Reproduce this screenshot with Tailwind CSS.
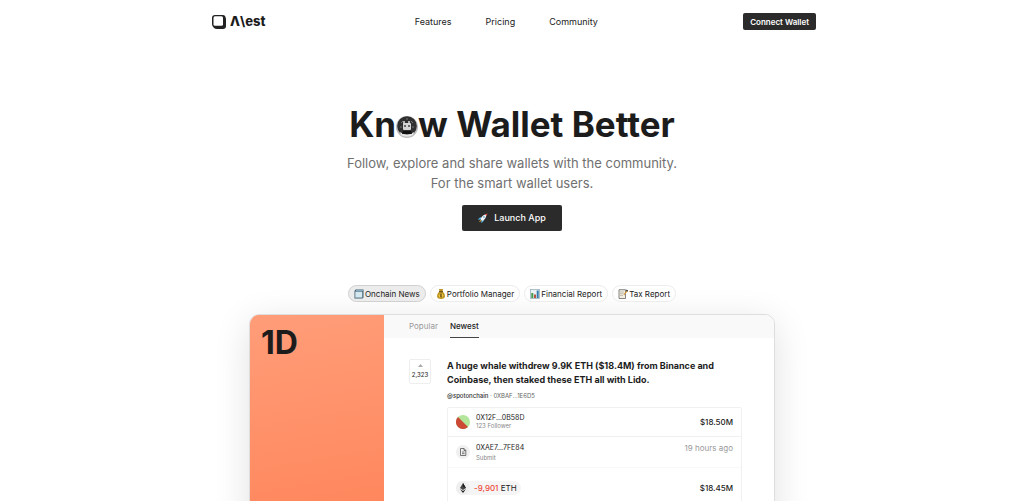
<!DOCTYPE html>
<html lang="en">
<head>
    <meta charset="UTF-8">
    <meta name="viewport" content="width=device-width, initial-scale=1.0">
    <title>Mest - Know Wallet Better</title>
    <script src="https://cdn.jsdelivr.net/npm/@tailwindcss/browser@4"></script>
</head>
<body class="h-screen overflow-hidden bg-white font-['Inter',sans-serif] text-[#1c1c1c]">
    <!-- Header -->
    <header class="mx-auto flex h-[43px] max-w-[608px] items-center justify-between pl-1">
        <a href="#" aria-label="Mest" class="flex items-center gap-1">
            <svg class="size-3.5" viewBox="0 0 14 14">
                <path d="M3 0h8q2 0 2.500 2L14 4v7q0 3-3 3H5q-2 0-3-1L0.500 11Q0 10 0 9V3q0-3 3-3z" fill="#222"/>
                <rect x="1.500" y="1.300" width="9.500" height="9.500" rx="1.500" fill="#fff"/>
            </svg>
            <span class="flex text-[13px] font-extrabold"><span>Λ</span><span>\</span><span>est</span></span>
        </a>
        <nav class="flex gap-[34px] pl-1 text-[9px]">
            <a href="#features">Features</a>
            <a href="#pricing">Pricing</a>
            <a href="#community">Community</a>
        </nav>
        <button class="h-[17px] rounded-[2px] bg-[#2b2b2b] px-[7px] text-[8px] font-semibold text-white">Connect Wallet</button>
    </header>

    <main>
        <!-- Hero -->
        <section class="flex flex-col items-center pt-[59px] text-center">
            <h1 class="flex items-center text-[35px] leading-[44px] font-bold">
                <span>Kn</span>
                <svg class="mt-1.5 size-[22px]" viewBox="0 0 22 22" role="img" aria-label="o">
                    <circle cx="11" cy="11" r="11" fill="#bdbdbd"/>
                    <circle cx="11" cy="10" r="9.800" fill="#303030"/>
                    <path d="M4 16Q11 21 18 16L17 19Q11 22 5 19z" fill="#e8e8e8"/>
                    <path d="M5 7l2-2M15 5l2 2M4 11h2M16 11h2M11 2v2" stroke="#777" stroke-width="1"/>
                    <rect x="7" y="7" width="8" height="7" rx="1" fill="#d5d5d5"/>
                    <path d="M8 5v3M13 5v3" stroke="#ddd" stroke-width="1.500"/>
                    <path d="M9 9v2M13 9v2" stroke="#444" stroke-width="1.500"/>
                    <path d="M7 15h8l1 3H6z" fill="#111"/>
                </svg>
                <span class="whitespace-pre">w Wallet Better</span>
            </h1>
            <p class="mt-[7px] text-[13px] leading-5 text-[#707070]">Follow, explore and share wallets with the community.<br>For the smart wallet users.</p>
            <button class="mt-3 flex h-[26px] w-[100px] items-center justify-center gap-1.5 rounded-[2px] bg-[#2b2b2b] text-[9px] font-medium text-white">
                <svg class="size-2.5" viewBox="0 0 10 10">
                    <path d="M3 4L1 5 0 7l3-.5zM6 7L5 9 3 10l.5-3z" fill="#4aa3c9"/>
                    <path d="M2.500 6Q4 2 8.500 1.200 8.500 6 4 8z" fill="#eef4f7"/>
                    <path d="M7 1.500L9.500.300 8.700 3z" fill="#d9533b"/>
                    <circle cx="6" cy="4" r="1" fill="#8dbbd0"/>
                    <path d="M2.500 7L.800 9.200 3.500 8z" fill="#f4a23b"/>
                </svg>
                Launch App
            </button>
        </section>

        <!-- Feature tabs -->
        <div class="mt-[54px] flex justify-center gap-1 text-[8px] text-[#222]">
            <button class="flex h-[17px] items-center gap-px rounded-full border border-[#d0d0d0] bg-[#ececec] px-[5px]">
                <svg class="size-2.5" viewBox="0 0 10 10">
                    <path d="M1.500.500h8v8l-1 1H.500V2z" fill="#3f5e6e"/>
                    <path d="M1.300 2.600h7v6h-7z" fill="#d6e8ef"/>
                    <path d="M2 1.400h7" stroke="#91b8ca" stroke-width="1"/>
                </svg>
                Onchain News
            </button>
            <button class="flex h-[17px] items-center gap-px rounded-full border border-[#ececec] bg-white px-[5px]">
                <svg class="size-2.5" viewBox="0 0 10 10">
                    <path d="M3 0h4L6.500 2.500Q9 4 9 7 9 10 5 10T1 7Q1 4 3.500 2.500z" fill="#bd9423"/>
                    <path d="M3 2.700h4" stroke="#574315" stroke-width="1"/>
                    <circle cx="5" cy="6.500" r="2.300" fill="#edc83d"/>
                    <path d="M6 5.300Q4 4.800 4 5.700T6 7.200Q6 8 4 7.700M5 4.500v4" fill="none" stroke="#654b16" stroke-width=".700"/>
                </svg>
                Portfolio Manager
            </button>
            <button class="flex h-[17px] items-center gap-px rounded-full border border-[#ececec] bg-white px-[5px]">
                <svg class="size-2.5" viewBox="0 0 10 10">
                    <rect x=".500" y=".500" width="9" height="9" fill="#e9f1f4" stroke="#8ea7b1" stroke-width=".700"/>
                    <path d="M1.300 4h2v5h-2z" fill="#459a4c"/>
                    <path d="M4 5.500h2V9H4z" fill="#b85443"/>
                    <path d="M6.700 1.500h2V9h-2z" fill="#347cac"/>
                </svg>
                Financial Report
            </button>
            <button class="flex h-[17px] items-center gap-px rounded-full border border-[#ececec] bg-white px-[5px]">
                <svg class="size-2.5" viewBox="0 0 10 10">
                    <path d="M1 .700h6.500v8.800H1z" fill="#f2eee1" stroke="#555" stroke-width=".700"/>
                    <path d="M2 3h4M2 4.700h3.500M2 6.400h3" stroke="#a5a094" stroke-width=".600"/>
                    <path d="M5.500 5.500L8.500 1.500l1 .800L6.300 6.200z" fill="#d59634"/>
                    <path d="M8.300 1l1.500 1.200" stroke="#333" stroke-width="1.200"/>
                </svg>
                Tax Report
            </button>
        </div>

        <!-- News preview -->
        <section class="mx-auto mt-3 flex h-[300px] max-w-[526px] overflow-hidden rounded-[10px] border border-[#dedede] bg-white shadow-[0_8px_36px_rgba(0,0,0,0.12)]">
            <aside class="w-[134px] shrink-0 bg-linear-170 from-[#ff9d79] to-[#ff7b4d] px-[11px] pt-2 text-[32px] leading-10 font-bold">1D</aside>
            <div class="min-w-0 grow">
                <div class="flex h-[23px] gap-3 bg-[#f9f9f9] pl-[25px] text-[8px]">
                    <button class="pb-px text-[#999]">Popular</button>
                    <button class="border-b border-[#444] font-medium">Newest</button>
                </div>
                <article class="flex gap-4 pt-[21px] pr-8 pl-[25px]">
                    <button class="flex h-[25px] w-[22px] shrink-0 flex-col items-center justify-center gap-1 rounded-[2px] border border-[#eee] text-[6px] leading-2 font-medium text-[#333]">
                        <svg class="h-[3px] w-[5px]" viewBox="0 0 5 3"><path d="M2.500 0L5 3H0z" fill="#aaa"/></svg>
                        2,323
                    </button>
                    <div class="min-w-0 grow">
                        <h2 class="text-[9px] leading-[14px] font-bold">A huge whale withdrew 9.9K ETH ($18.4M) from Binance and<br>Coinbase, then staked these ETH all with Lido.</h2>
                        <p class="mt-1 text-[6px] leading-[10px] text-[#666]"><span class="font-medium text-[#333]">@spotonchain</span> · 0XBAF...1E6D5</p>
                        <div class="mt-1.5 rounded-[2px] border border-[#f0f0f0]">
                            <div class="flex h-[29px] items-center gap-1.5 border-b border-[#f0f0f0] px-2">
                                <svg class="size-[14px]" viewBox="0 0 14 14">
                                    <circle cx="7" cy="7" r="7" fill="#b3e59a"/>
                                    <path d="M2 2A7 7 0 0 0 12 12z" fill="#cb4935"/>
                                </svg>
                                <div class="grow">
                                    <p class="text-[7px] leading-2">0X12F...0B58D</p>
                                    <p class="text-[6px] leading-2 text-[#888]">123 Follower</p>
                                </div>
                                <span class="text-[8px] font-medium">$18.50M</span>
                            </div>
                            <div class="flex items-start gap-1.5 border-b border-[#f9f9f9] px-2 pt-1.5 pb-1">
                                <svg class="mt-0.5 size-[14px]" viewBox="0 0 14 14">
                                    <circle cx="7" cy="7" r="7" fill="#f0f0f0"/>
                                    <path d="M4.500 3.500h3.500L9.800 5.300v5.200H4.500zM8 3.500v2h1.800M6 7h2.500M6 8.700h2.500" fill="none" stroke="#555" stroke-width=".800"/>
                                </svg>
                                <div class="grow">
                                    <p class="text-[7px] leading-[10px]">0XAE7...7FE84</p>
                                    <p class="text-[6px] leading-[10px] text-[#888]">Submit</p>
                                </div>
                                <span class="text-[8px] leading-[10px] text-[#999]">19 hours ago</span>
                            </div>
                            <div class="mt-[13px] flex items-center justify-between px-2 pb-2">
                                <div class="flex h-[14px] items-center gap-1 rounded-full bg-[#f5f5f5] pr-1 text-[8px]">
                                    <svg class="size-[14px]" viewBox="0 0 14 14">
                                        <circle cx="7" cy="7" r="7" fill="#efefef"/>
                                        <path d="M7 2l3 5-3 2-3-2z" fill="#444"/>
                                        <path d="M7 2l3 5-3-1.300zM4 8l3 2 3-2-3 4z" fill="#1c1c1c"/>
                                    </svg>
                                    <span><span class="font-medium text-[#ef4a3b]">-9,901</span> ETH</span>
                                </div>
                                <span class="text-[8px] font-medium">$18.45M</span>
                            </div>
                        </div>
                    </div>
                </article>
            </div>
        </section>
    </main>
</body>
</html>
